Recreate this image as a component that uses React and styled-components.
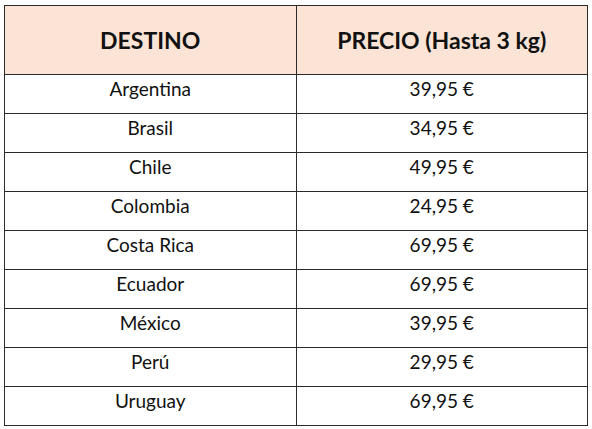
import React from 'react'
import styled, { createGlobalStyle } from 'styled-components'

const GlobalStyle = createGlobalStyle`
  html, body {
    margin: 0;
    padding: 0;
    background: #ffffff;
  }
  body {
    font-family: Lato, "Open Sans", "Liberation Sans", sans-serif;
  }
`

const Page = styled.div`
  width: 592px;
  height: 429px;
  padding: 5px 4px 0 4px;
  box-sizing: border-box;
  overflow: hidden;
`

const Table = styled.table`
  width: 584px;
  border-collapse: collapse;
  table-layout: fixed;
`

const HeadRow = styled.tr`
  height: 69px;
`

const BodyRow = styled.tr`
  height: 39px;
`

const HeadCell = styled.th`
  padding: 0;
  background: #fbe4d5;
  border: 1.5px solid #2b2b2b;
  font-size: 23px;
  font-weight: 700;
  color: #111;
  text-align: center;
  vertical-align: middle;
`

const Cell = styled.td`
  padding: 2px 0 0 0;
  border: 1.5px solid #2b2b2b;
  font-size: 19px;
  font-weight: 400;
  color: #111;
  text-align: center;
  vertical-align: top;
  line-height: 24px;
`

const rows = [
  ['Argentina', '39,95 €'],
  ['Brasil', '34,95 €'],
  ['Chile', '49,95 €'],
  ['Colombia', '24,95 €'],
  ['Costa Rica', '69,95 €'],
  ['Ecuador', '69,95 €'],
  ['México', '39,95 €'],
  ['Perú', '29,95 €'],
  ['Uruguay', '69,95 €'],
]

const App = () => {
  return (
    <Page>
      <GlobalStyle />
      <Table>
        <thead>
          <HeadRow>
            <HeadCell>DESTINO</HeadCell>
            <HeadCell>PRECIO (Hasta 3 kg)</HeadCell>
          </HeadRow>
        </thead>
        <tbody>
          {rows.map(([dest, price]) => (
            <BodyRow key={dest}>
              <Cell>{dest}</Cell>
              <Cell>{price}</Cell>
            </BodyRow>
          ))}
        </tbody>
      </Table>
    </Page>
  )
}

export default App
